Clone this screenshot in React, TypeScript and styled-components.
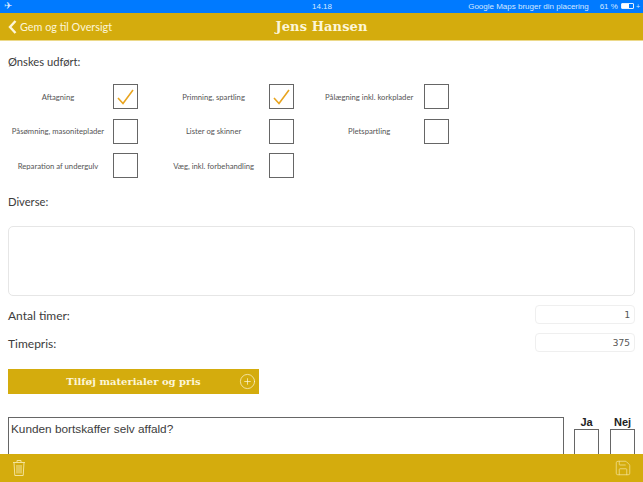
import styled, { createGlobalStyle } from 'styled-components';
import { CirclePlus, Save } from 'lucide-react';

const GOLD = '#d4ac0d';

const GlobalStyle = createGlobalStyle`
  html, body {
    margin: 0;
    padding: 0;
    background: #ffffff;
  }
  * {
    box-sizing: border-box;
  }
`;

const Page = styled.div`
  width: 643px;
  height: 482px;
  display: flex;
  flex-direction: column;
  overflow: hidden;
  font-family: 'Lato', 'Liberation Sans', sans-serif;
  color: #3c3c3c;
`;

const StatusBar = styled.div`
  flex: 0 0 13px;
  display: grid;
  grid-template-columns: 1fr auto 1fr;
  align-items: center;
  padding: 0 3px 1px 4px;
  background: #007aff;
  color: #d5e8ff;
  font-family: 'Liberation Sans', sans-serif;
  font-size: 8px;
`;

const PlaneGlyph = styled.span`
  font-size: 10px;
  line-height: 10px;
`;

const StatusRight = styled.div`
  display: flex;
  justify-content: flex-end;
  align-items: center;
`;

const Location = styled.span`
  margin-right: 11px;
`;

const Battery = styled.span`
  width: 13px;
  height: 6px;
  margin-left: 3px;
  border: 1px solid #e6f1ff;
  border-radius: 1px;
  background: linear-gradient(to right, #ffffff 61%, transparent 61%);
`;

const Bolt = styled.span`
  margin-left: 2px;
  font-size: 7px;
`;

const Header = styled.header`
  flex: 0 0 28px;
  display: grid;
  grid-template-columns: 1fr auto 1fr;
  align-items: center;
  padding: 0 8px;
  background: ${GOLD};
  border-bottom: 1px solid #ecd98a;
  color: #fdf6d8;
`;

const BackLink = styled.div`
  display: flex;
  align-items: center;
  gap: 3px;
  font-size: 10.8px;
`;

const Title = styled.div`
  font-family: 'DejaVu Serif', serif;
  font-size: 13px;
  font-weight: 700;
  letter-spacing: 0.1px;
`;

const Content = styled.main`
  flex: 1;
  min-height: 0;
  padding: 14px 8px 0;
  overflow: hidden;
`;

const SectionLabel = styled.div`
  font-size: 11.2px;
  line-height: 14px;
`;

const OptionGrid = styled.div`
  display: grid;
  grid-template-columns: repeat(3, 130px);
  column-gap: 25.6px;
  row-gap: 9.7px;
  margin: 15px 0 17px;
`;

const OptionItem = styled.div`
  display: flex;
  align-items: center;
  gap: 5px;
`;

const OptionLabel = styled.span`
  width: 100px;
  font-size: 7.7px;
  text-align: center;
  white-space: nowrap;
  color: #555555;
`;

const CheckBox = styled.span`
  flex: 0 0 25px;
  height: 25px;
  display: flex;
  align-items: center;
  justify-content: center;
  border: 1px solid #666666;
`;

const NotesBox = styled.div`
  height: 70px;
  margin: 17px 0 8px;
  border: 1px solid #e6e6e6;
  border-radius: 5px;
`;

const FieldRow = styled.div`
  display: flex;
  align-items: center;
  justify-content: space-between;
  height: 20px;
  margin-bottom: 8px;
`;

const FieldLabel = styled.span`
  padding-top: 2px;
  font-size: 12px;
`;

const FieldInput = styled.div`
  width: 100px;
  height: 19px;
  padding-right: 4px;
  border: 1px solid #efefef;
  border-radius: 4px;
  font-family: 'DejaVu Sans Mono', monospace;
  font-size: 9.5px;
  line-height: 17px;
  text-align: right;
  color: #555555;
`;

const AddButton = styled.div`
  position: relative;
  width: 251px;
  height: 25px;
  margin-top: 17px;
  display: flex;
  align-items: center;
  justify-content: center;
  background: ${GOLD};
  color: #fdf6d8;
  font-family: 'DejaVu Serif', serif;
  font-size: 10px;
  font-weight: 700;
`;

const AddIcon = styled.span`
  position: absolute;
  right: 3px;
  top: 4px;
  display: flex;
`;

const QuestionRow = styled.div`
  display: flex;
  margin-top: 23px;
`;

const QuestionBox = styled.div`
  width: 556px;
  height: 60px;
  padding: 4px 2px;
  border: 1px solid #666666;
  font-family: 'Liberation Sans', sans-serif;
  font-size: 11.8px;
`;

const AnswerColumn = styled.div<{ $gap: number }>`
  width: 25px;
  margin-top: -1px;
  margin-left: ${({ $gap }) => $gap}px;
  text-align: center;
  font-family: 'Liberation Sans', sans-serif;
  font-size: 11px;
  font-weight: 700;
  line-height: 13px;
  color: #222222;
`;

const AnswerBox = styled.div`
  height: 40px;
  border: 1px solid #666666;
`;

const Footer = styled.footer`
  flex: 0 0 28px;
  display: flex;
  align-items: center;
  justify-content: space-between;
  padding: 0 11px 0 13px;
  background: ${GOLD};
  color: #f3e39a;
`;

const BackChevron = () => (
  <svg width="9" height="14" viewBox="0 0 9 14" fill="none">
    <path d="M7.5 1 L2 7 L7.5 13" stroke="currentColor" strokeWidth="2.4" />
  </svg>
);

const Check = () => (
  <svg width="17" height="16" viewBox="0 0 17 16" fill="none">
    <path d="M1 9 L6 14.5 L16 1" stroke="#e8a41f" strokeWidth="1.6" />
  </svg>
);

const TrashCan = () => (
  <svg width="12" height="18" viewBox="1 0 12 18" fill="none" stroke="currentColor" strokeWidth="1">
    <path d="M1 3.5 H13 M5 3.5 V1.5 H9 V3.5" />
    <path d="M2 3.5 L2.8 16.5 H11.2 L12 3.5" />
    <path d="M5 6 V14.5 M7 6 V14.5 M9 6 V14.5" />
  </svg>
);

const options = [
  { label: 'Aftagning', checked: true },
  { label: 'Primning, spartling', checked: true },
  { label: 'Pålægning inkl. korkplader', checked: false },
  { label: 'Påsømning, masoniteplader', checked: false },
  { label: 'Lister og skinner', checked: false },
  { label: 'Pletspartling', checked: false },
  { label: 'Reparation af undergulv', checked: false },
  { label: 'Væg, inkl. forbehandling', checked: false },
];

export default function App() {
  return (
    <Page>
      <GlobalStyle />
      <StatusBar>
        <PlaneGlyph>✈</PlaneGlyph>
        <span>14.18</span>
        <StatusRight>
          <Location>Google Maps bruger din placering</Location>
          <span>61 %</span>
          <Battery />
          <Bolt>+</Bolt>
        </StatusRight>
      </StatusBar>
      <Header>
        <BackLink>
          <BackChevron />
          Gem og til Oversigt
        </BackLink>
        <Title>Jens Hansen</Title>
      </Header>
      <Content>
        <SectionLabel>Ønskes udført:</SectionLabel>
        <OptionGrid>
          {options.map((option) => (
            <OptionItem key={option.label}>
              <OptionLabel>{option.label}</OptionLabel>
              <CheckBox>{option.checked && <Check />}</CheckBox>
            </OptionItem>
          ))}
        </OptionGrid>
        <SectionLabel>Diverse:</SectionLabel>
        <NotesBox />
        <FieldRow>
          <FieldLabel>Antal timer:</FieldLabel>
          <FieldInput>1</FieldInput>
        </FieldRow>
        <FieldRow>
          <FieldLabel>Timepris:</FieldLabel>
          <FieldInput>375</FieldInput>
        </FieldRow>
        <AddButton>
          Tilføj materialer og pris
          <AddIcon>
            <CirclePlus size={17} strokeWidth={1} />
          </AddIcon>
        </AddButton>
        <QuestionRow>
          <QuestionBox>Kunden bortskaffer selv affald?</QuestionBox>
          <AnswerColumn $gap={10}>
            Ja
            <AnswerBox />
          </AnswerColumn>
          <AnswerColumn $gap={11}>
            Nej
            <AnswerBox />
          </AnswerColumn>
        </QuestionRow>
      </Content>
      <Footer>
        <TrashCan />
        <Save size={18} strokeWidth={1} />
      </Footer>
    </Page>
  );
}
